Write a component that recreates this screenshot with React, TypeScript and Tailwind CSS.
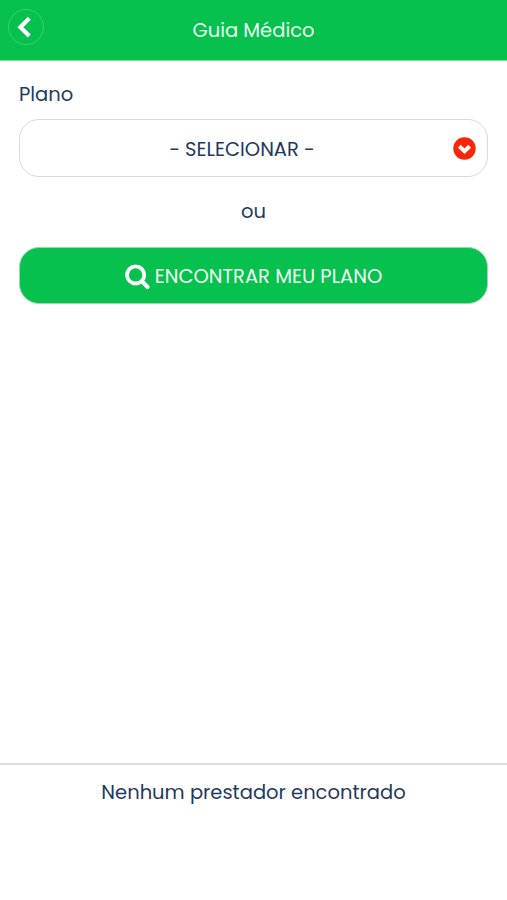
import type { ReactNode } from "react";

function ChevronLeftIcon() {
  return (
    <svg className="h-9 w-9" viewBox="0 0 36 36" fill="none">
      <circle cx="18" cy="18" r="17.5" stroke="#3fcf72" strokeWidth="1" />
      <path d="M19.8 10.8 L12.4 18.2 L19.8 25.6" stroke="white" strokeWidth="4.2" strokeLinecap="square" />
    </svg>
  );
}

function ChevronCircleDownIcon() {
  return (
    <svg className="h-[23px] w-[23px]" viewBox="0 0 23 23" fill="none">
      <circle cx="11.5" cy="11.5" r="11.2" fill="#fb2606" />
      <path d="M6.3 9.2 L11.5 14.2 L16.7 9.2" stroke="white" strokeWidth="4" />
    </svg>
  );
}

function SearchIcon() {
  return (
    <svg className="mt-0.5 h-[26px] w-[26px]" viewBox="0 0 26 26" fill="none" stroke="white">
      <circle cx="10.6" cy="10.9" r="8.6" strokeWidth="3.8" />
      <path d="M17 17.3 L22.6 22.9" strokeWidth="4.2" strokeLinecap="round" />
    </svg>
  );
}

function Header({ title }: { title: string }) {
  return (
    <header className="grid h-[61px] grid-cols-[36px_1fr_36px] items-center border-b border-[#7fdf9f] bg-[#06c14d] px-[7.5px] pb-[7px]">
      <button type="button" aria-label="Voltar">
        <ChevronLeftIcon />
      </button>
      <h1 className="pt-2 text-center text-[19.5px] leading-6 text-[#e6fbec]">{title}</h1>
    </header>
  );
}

function Label({ children }: { children: ReactNode }) {
  return <label className="block h-6 text-[19.5px] leading-6">{children}</label>;
}

export default function App() {
  return (
    <div className="flex h-[900px] flex-col bg-white font-['Poppins','Inter',sans-serif] text-[#1f3a5f]">
      <Header title="Guia Médico" />

      <main className="flex flex-1 flex-col px-[19px] pt-[22px]">
        <Label>Plano</Label>
        <button
          type="button"
          className="mt-3 flex h-[58px] w-full items-center rounded-[20px] border-[1.5px] border-[#d9d9d9] pr-[11px]"
        >
          <span className="flex-1 pt-[3px] pl-[11px] text-center text-[19.5px] leading-6">- SELECIONAR -</span>
          <ChevronCircleDownIcon />
        </button>

        <p className="mt-[23px] text-center text-[19.5px] leading-6">ou</p>

        <button
          type="button"
          className="mt-[23px] flex h-[57px] w-full items-center justify-center gap-1 rounded-[20px] border border-[#9bd9af] bg-[#06c14d] text-[19.5px] leading-6 text-[#effff3]"
        >
          <SearchIcon />
          <span className="pt-0.5">ENCONTRAR MEU PLANO</span>
        </button>
      </main>

      <footer className="h-[137px] border-t-2 border-[#dedede] pt-4 text-center">
        <p className="text-[19.5px] leading-6">Nenhum prestador encontrado</p>
      </footer>
    </div>
  );
}
